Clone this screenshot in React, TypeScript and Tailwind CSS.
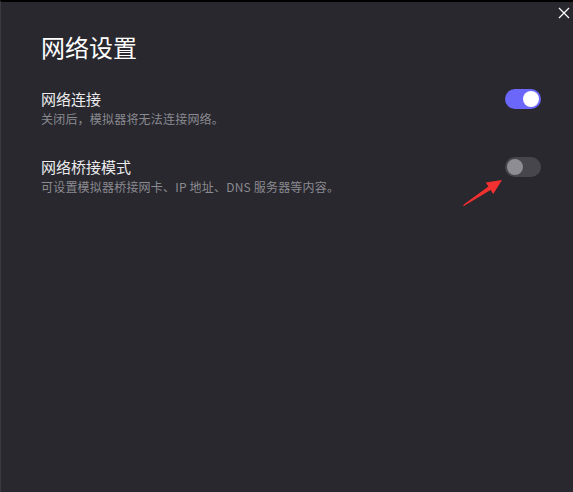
import {useState} from "react";

function Toggle({on, onClick}: {on: boolean; onClick: () => void}) {
  return (
    <button
      onClick={onClick}
      className={
        on
          ? "w-9 h-5 rounded-full bg-[#6b67fb] flex items-center justify-end px-[2px] shrink-0"
          : "w-9 h-5 rounded-full bg-[#47464c] flex items-center justify-start px-[2px] shrink-0"
      }
    >
      <span className={on ? "w-4 h-4 rounded-full bg-white" : "w-4 h-4 rounded-full bg-[#8e8d93]"} />
    </button>
  );
}

function SettingRow({title, desc, on, onToggle}: {title: string; desc: string; on: boolean; onToggle: () => void}) {
  return (
    <div className="flex items-start justify-between">
      <div className="flex flex-col">
        <div className="text-[15px] leading-5 text-[#ececee]">{title}</div>
        <div className="mt-[2px] text-[12px] leading-4 tracking-[0.2px] text-[#8a8a90]">{desc}</div>
      </div>
      <Toggle on={on} onClick={onToggle} />
    </div>
  );
}

export default function App() {
  const [network, setNetwork] = useState(true);
  const [bridge, setBridge] = useState(false);

  return (
    <div
      className="relative w-[573px] h-[492px] bg-[#29282f] border-t-2 border-t-black border-l border-l-[#3a393f] pl-[40px] pr-[32px] pt-[29px] overflow-hidden"
      style={{fontFamily: '"Noto Sans CJK SC", "Noto Sans", sans-serif'}}
    >
      <button className="absolute top-[5px] right-[3px] w-[12px] h-[12px] text-white">
        <svg viewBox="0 0 12 12" width="12" height="12" fill="none" stroke="currentColor" strokeWidth="1.2">
          <path d="M1 1L11 11M11 1L1 11" />
        </svg>
      </button>

      <h1 className="text-[24px] leading-8 text-white mb-[26px]">网络设置</h1>

      <div className="flex flex-col gap-[30px]">
        <SettingRow
          title="网络连接"
          desc="关闭后，模拟器将无法连接网络。"
          on={network}
          onToggle={() => setNetwork(!network)}
        />
        <SettingRow
          title="网络桥接模式"
          desc="可设置模拟器桥接网卡、IP 地址、DNS 服务器等内容。"
          on={bridge}
          onToggle={() => setBridge(!bridge)}
        />
      </div>

      {/* annotation arrow */}
      <svg className="absolute left-0 top-0 pointer-events-none" width="573" height="492" viewBox="0 0 573 492">
        <polygon
          points="462,204.5 489.6,187.9 492.3,192 501,178 484.7,180.4 487.4,184.5 462.8,202.6"
          fill="#f2302f"
        />
      </svg>
    </div>
  );
}
